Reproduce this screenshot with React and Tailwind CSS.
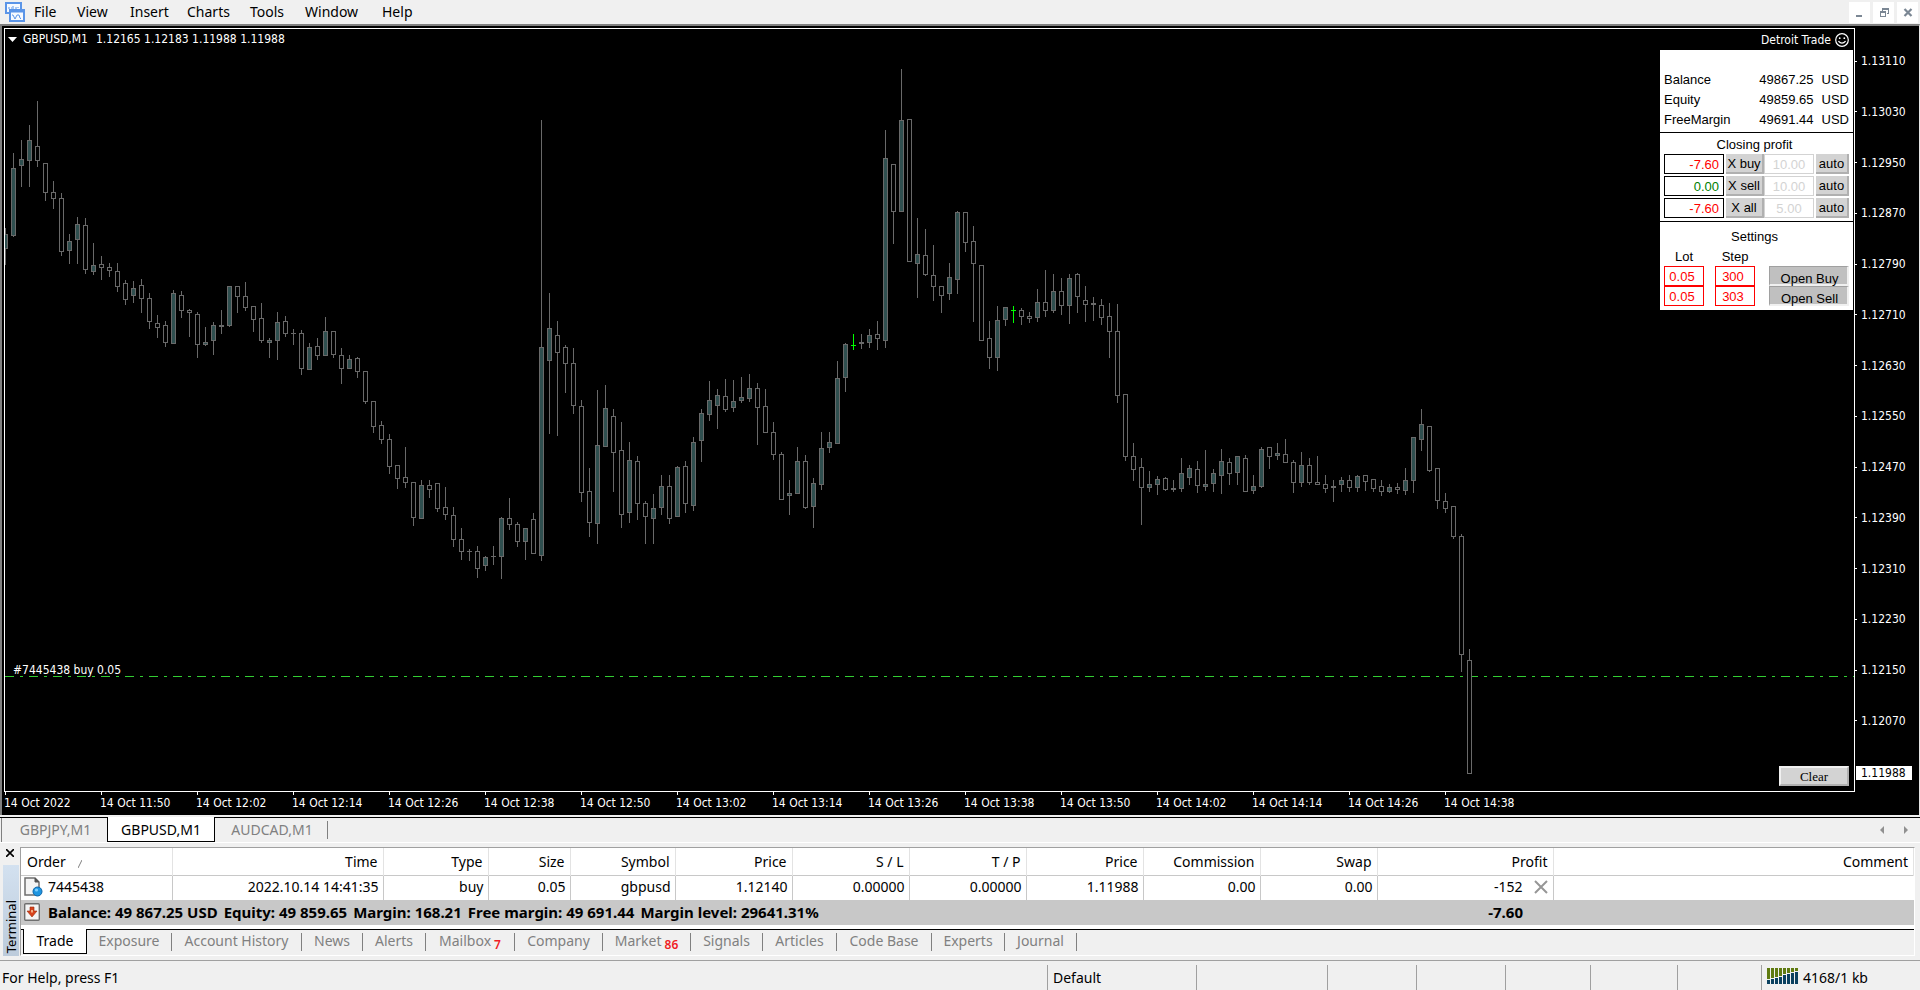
import { useState } from "react";

// x of the first candle and y of the plot's first row, in window pixels
const STEP = 8;
const TOP = 29;

// [high, body top, body bottom, low, kind] : 1 = up, 0 = down, 2 = flat
const CANDLES = [
    [228, 234, 249, 265, 1], [153, 168, 236, 237, 1], [140, 159, 166, 187, 1], [125, 140, 161, 187, 1],
    [101, 146, 161, 167, 0], [163, 163, 193, 201, 0], [181, 192, 199, 209, 0], [193, 198, 252, 256, 0],
    [234, 241, 251, 264, 1], [217, 224, 240, 264, 1], [218, 225, 270, 274, 0], [243, 265, 272, 275, 1],
    [256, 264, 268, 280, 0], [263, 267, 271, 277, 0], [263, 271, 287, 292, 0], [280, 283, 300, 305, 0],
    [281, 288, 296, 303, 1], [279, 285, 299, 313, 0], [293, 298, 322, 329, 0], [315, 323, 328, 338, 0],
    [321, 325, 343, 347, 0], [290, 293, 344, 344, 1], [291, 295, 311, 318, 0], [309, 310, 313, 337, 0],
    [312, 314, 345, 358, 0], [327, 342, 345, 346, 1], [322, 325, 341, 355, 1], [310, 325, 327, 334, 1],
    [286, 286, 326, 327, 1], [286, 286, 297, 313, 0], [282, 296, 308, 311, 0], [306, 306, 320, 332, 0],
    [303, 318, 341, 343, 0], [338, 340, 343, 358, 1], [312, 322, 341, 360, 1], [316, 321, 334, 337, 0],
    [329, 333, 334, 345, 0], [330, 333, 369, 375, 0], [343, 347, 370, 370, 1], [338, 346, 356, 360, 0],
    [317, 331, 356, 356, 1], [331, 331, 355, 358, 0], [348, 355, 369, 384, 0], [355, 359, 369, 369, 1],
    [357, 358, 372, 378, 0], [371, 371, 402, 404, 0], [401, 401, 427, 433, 0], [421, 425, 440, 444, 0],
    [434, 439, 467, 474, 0], [465, 465, 479, 489, 0], [447, 477, 483, 488, 0], [482, 482, 518, 526, 0],
    [480, 485, 519, 519, 1], [480, 485, 490, 498, 0], [483, 483, 509, 512, 0], [487, 507, 515, 520, 0],
    [507, 515, 540, 547, 0], [528, 539, 552, 560, 0], [549, 551, 552, 561, 0], [546, 551, 569, 578, 0],
    [556, 557, 566, 571, 1], [546, 556, 557, 565, 0], [517, 518, 557, 579, 1], [498, 518, 525, 530, 0],
    [522, 524, 542, 547, 0], [528, 528, 542, 560, 1], [513, 519, 554, 554, 0], [120, 347, 556, 561, 1],
    [293, 328, 361, 434, 1], [321, 335, 353, 436, 0], [345, 347, 364, 393, 0], [348, 363, 406, 414, 0],
    [400, 406, 493, 502, 0], [468, 491, 523, 537, 0], [390, 445, 524, 544, 1], [385, 408, 447, 447, 1],
    [409, 416, 453, 492, 0], [422, 450, 515, 528, 0], [442, 460, 513, 523, 1], [456, 461, 504, 520, 0],
    [501, 503, 517, 544, 0], [494, 508, 519, 544, 1], [475, 486, 508, 515, 1], [475, 486, 519, 524, 0],
    [466, 467, 517, 517, 1], [461, 466, 504, 513, 0], [437, 442, 506, 511, 1], [409, 413, 441, 462, 1],
    [381, 400, 415, 421, 1], [389, 395, 406, 429, 1], [379, 396, 410, 412, 0], [380, 401, 408, 412, 1],
    [377, 397, 401, 403, 1], [374, 388, 399, 402, 1], [383, 388, 408, 445, 0], [389, 406, 433, 433, 0],
    [422, 432, 455, 460, 0], [452, 454, 500, 500, 0], [480, 493, 496, 515, 1], [447, 461, 494, 494, 1],
    [455, 461, 508, 509, 0], [478, 483, 507, 528, 1], [432, 448, 485, 490, 1], [432, 442, 448, 453, 1],
    [361, 378, 444, 444, 1], [343, 344, 378, 392, 1], [334, 345, 346, 350, 2], [334, 342, 344, 349, 0],
    [329, 335, 343, 348, 1], [321, 334, 339, 350, 0], [130, 158, 341, 348, 1], [164, 164, 212, 244, 0],
    [69, 120, 212, 212, 1], [119, 119, 262, 262, 0], [218, 254, 264, 298, 1], [229, 255, 275, 276, 0],
    [245, 275, 287, 301, 0], [286, 286, 296, 313, 0], [263, 277, 294, 300, 1], [211, 212, 280, 294, 1],
    [212, 212, 243, 252, 0], [226, 241, 264, 322, 0], [265, 265, 341, 341, 0], [321, 338, 358, 369, 0],
    [306, 320, 358, 371, 1], [307, 307, 320, 326, 1], [306, 310, 311, 323, 2], [308, 310, 317, 325, 0],
    [312, 316, 319, 323, 0], [289, 302, 318, 322, 1], [270, 302, 311, 317, 0], [274, 291, 311, 313, 1],
    [278, 291, 306, 315, 0], [274, 278, 306, 324, 1], [273, 274, 297, 313, 0], [286, 300, 305, 322, 0],
    [297, 303, 305, 321, 0], [299, 305, 318, 325, 0], [303, 316, 332, 358, 0], [304, 331, 396, 403, 0],
    [394, 394, 457, 461, 0], [443, 456, 470, 481, 0], [458, 467, 488, 525, 0], [471, 484, 488, 492, 1],
    [476, 479, 485, 495, 1], [477, 478, 490, 491, 0], [480, 488, 490, 492, 0], [458, 473, 489, 492, 1],
    [465, 468, 478, 485, 1], [461, 469, 486, 493, 0], [450, 484, 487, 491, 1], [469, 473, 484, 492, 1],
    [449, 461, 476, 494, 1], [458, 462, 474, 485, 0], [456, 456, 473, 485, 1], [455, 458, 492, 492, 0],
    [475, 486, 491, 494, 1], [447, 449, 487, 488, 1], [447, 447, 457, 469, 0], [443, 453, 456, 460, 1],
    [439, 454, 463, 463, 0], [460, 462, 483, 493, 0], [452, 465, 483, 487, 1], [458, 465, 483, 485, 0],
    [456, 482, 485, 485, 0], [475, 484, 489, 493, 0], [480, 486, 488, 502, 0], [477, 480, 485, 492, 1],
    [475, 480, 488, 492, 0], [475, 476, 488, 492, 1], [475, 475, 482, 491, 0], [479, 479, 489, 492, 0],
    [480, 486, 492, 496, 0], [484, 487, 492, 493, 1], [483, 487, 490, 494, 0], [468, 480, 491, 495, 1],
    [437, 437, 481, 493, 1], [409, 424, 440, 451, 1], [426, 426, 471, 472, 0], [468, 468, 501, 509, 0],
    [493, 501, 509, 513, 0], [506, 506, 537, 539, 0], [534, 536, 655, 672, 0], [649, 660, 774, 774, 0],
];

const PRICES = [
    "1.13110", "1.13030", "1.12950", "1.12870", "1.12790", "1.12710", "1.12630",
    "1.12550", "1.12470", "1.12390", "1.12310", "1.12230", "1.12150", "1.12070",
];

const TIMES = [
    "14 Oct 2022", "14 Oct 11:50", "14 Oct 12:02", "14 Oct 12:14",
    "14 Oct 12:26", "14 Oct 12:38", "14 Oct 12:50", "14 Oct 13:02",
    "14 Oct 13:14", "14 Oct 13:26", "14 Oct 13:38", "14 Oct 13:50",
    "14 Oct 14:02", "14 Oct 14:14", "14 Oct 14:26", "14 Oct 14:38",
];

const MENU = [
    ["File", "w-[43px]"],
    ["View", "w-[53px]"],
    ["Insert", "w-[57px]"],
    ["Charts", "w-[63px]"],
    ["Tools", "w-[55px]"],
    ["Window", "w-[77px]"],
    ["Help", "w-[53px]"],
];

const CHART_TABS = [
    ["GBPJPY,M1", "w-[105px]"],
    ["GBPUSD,M1", "w-[108px]"],
    ["AUDCAD,M1", "w-[112px]"],
];

const COLUMNS = [
    ["Order", "w-[151px]"],
    ["Time", "w-[211px]"],
    ["Type", "w-[105px]"],
    ["Size", "w-[82px]"],
    ["Symbol", "w-[105px]"],
    ["Price", "w-[117px]"],
    ["S / L", "w-[117px]"],
    ["T / P", "w-[117px]"],
    ["Price", "w-[117px]"],
    ["Commission", "w-[117px]"],
    ["Swap", "w-[117px]"],
    ["Profit", "w-[176px]"],
    ["Comment", ""],
];

const ORDER = [
    "2022.10.14 14:41:35", "buy", "0.05", "gbpusd", "1.12140",
    "0.00000", "0.00000", "1.11988", "0.00", "0.00",
];

const TERMINAL_TABS = [
    ["Trade", "w-[64px]"],
    ["Exposure", "w-[85px]"],
    ["Account History", "w-[130px]"],
    ["News", "w-[61px]"],
    ["Alerts", "w-[63px]"],
    ["Mailbox", "w-[89px]", "7"],
    ["Company", "w-[88px]"],
    ["Market", "w-[88px]", "86"],
    ["Signals", "w-[72px]"],
    ["Articles", "w-[74px]"],
    ["Code Base", "w-[95px]"],
    ["Experts", "w-[73px]"],
    ["Journal", "w-[72px]"],
];

function Logo() {
    return (
        <svg className="h-5 w-5" viewBox="0 0 20 20" fill="none" stroke="#5b95e8" strokeWidth="2">
            <rect x="1" y="1" width="15" height="10" fill="#f7faff" />
            <path d="M4 7v-2M6 6h1M8 4v4M11 5v2M13 5v1" strokeWidth="1" />
            <rect x="5" y="8" width="14" height="11" fill="#f7faff" />
            <path d="M5 9h14" strokeWidth="3" />
            <path d="M7 13h1l2 4 2-4 2 0 1 3 1 1" strokeWidth="1" />
        </svg>
    );
}

function Candles() {
    return (
        <svg className="absolute inset-0 h-full w-full" shapeRendering="crispEdges">
            <line
                x1="0"
                x2="100%"
                y1={676.5 - TOP}
                y2={676.5 - TOP}
                stroke="#32cd32"
                strokeDasharray="9 6 3 6"
            />
            {CANDLES.map(([high, top, bottom, low, kind], i) => {
                const color = kind === 2 ? "#00ff00" : "#696969";
                const height = bottom - top;
                return (
                    <g key={i} transform={`translate(${i * STEP} ${-TOP})`}>
                        <rect x="0" y={high} width="1" height={low - high} fill={color} />
                        <rect x="-2" y={top} width="5" height={height} fill={color} />
                        {height > 2 && (
                            <rect
                                x="-1"
                                y={top + 1}
                                width="3"
                                height={height - 2}
                                fill={kind === 1 ? "#2f4f4f" : "#000"}
                            />
                        )}
                    </g>
                );
            })}
        </svg>
    );
}

function Account({ name, value }) {
    return (
        <div className="flex h-5 items-center">
            <span className="flex-1">{name}</span>
            <span>{value}</span>
            <span className="ml-2">USD</span>
        </div>
    );
}

function ClosingRow({ name, profit, positive, target }) {
    return (
        <div className="flex h-5">
            <output
                className={`flex w-[60px] items-center justify-end border border-black pt-0.5 pr-1 ${positive ? "text-[#008000]" : "text-[#ff0000]"}`}
            >
                {profit}
            </output>
            <button className="ml-0.5 w-[38px] border-r-2 border-b-2 border-[#b0b0b0] bg-[#d3d3d3] pt-0.5">
                {name}
            </button>
            <input
                aria-label={`${name} target`}
                defaultValue={target}
                className="w-[50px] border border-[#d3d3d3] bg-white pt-0.5 text-center text-[#d3d3d3]"
            />
            <button className="ml-0.5 w-[33px] border-r-2 border-b-2 border-[#b0b0b0] bg-[#d3d3d3] pt-0.5">
                auto
            </button>
        </div>
    );
}

function SettingsRow({ lot, step, action }) {
    return (
        <div className="flex h-5">
            <input
                aria-label={`${action} lot`}
                defaultValue={lot}
                className="w-10 border border-[#ff0000] bg-white pt-0.5 pr-1 text-center text-[#ff0000]"
            />
            <input
                aria-label={`${action} step`}
                defaultValue={step}
                className="ml-[11px] w-10 border border-[#ff0000] bg-white pt-0.5 pr-1 text-center text-[#ff0000]"
            />
            <button className="ml-3.5 w-20 border-t border-r-2 border-b-2 border-l border-t-[#a0a0a0] border-r-[#f0f0f0] border-b-[#f0f0f0] border-l-[#a0a0a0] bg-[#c0c0c0] pt-1 pl-0.5">
                {action}
            </button>
        </div>
    );
}

function TradePanel() {
    return (
        <div className="absolute top-0 right-px w-[193px]">
            <div className="flex h-[21px] items-center justify-end gap-1 pr-1 text-white">
                Detroit Trade
                <svg className="h-3.5 w-3.5" viewBox="0 0 14 14" fill="none" stroke="white">
                    <circle cx="7" cy="7" r="6.3" strokeWidth="1.2" />
                    <circle cx="4.7" cy="5.2" r=".9" fill="white" stroke="none" />
                    <circle cx="9.3" cy="5.2" r=".9" fill="white" stroke="none" />
                    <path d="M3.4 8.2q3.6 4 7.2 0" strokeWidth="1.2" />
                </svg>
            </div>
            <div className="bg-white font-['Liberation_Sans',sans-serif] text-[13px] leading-4 text-black">
                <div className="px-1 pt-5 pb-0.5">
                    <Account name="Balance" value="49867.25" />
                    <Account name="Equity" value="49859.65" />
                    <Account name="FreeMargin" value="49691.44" />
                </div>
                <div className="border-y border-black px-1 pt-1 pb-[3px]">
                    <div className="mb-px pr-1 text-center">Closing profit</div>
                    <div className="flex flex-col gap-0.5">
                        <ClosingRow name="X buy" profit="-7.60" target="10.00" />
                        <ClosingRow name="X sell" profit="0.00" positive target="10.00" />
                        <ClosingRow name="X all" profit="-7.60" target="5.00" />
                    </div>
                </div>
                <div className="px-1 pt-[7px] pb-1">
                    <div className="pr-1 text-center">Settings</div>
                    <div className="flex pt-1 pb-px">
                        <span className="w-10 text-center">Lot</span>
                        <span className="ml-[11px] w-10 text-center">Step</span>
                    </div>
                    <SettingsRow lot="0.05" step="300" action="Open Buy" />
                    <SettingsRow lot="0.05" step="303" action="Open Sell" />
                </div>
            </div>
        </div>
    );
}

function ChartWindow() {
    return (
        <section className="flex min-h-0 flex-1 flex-col border-t-2 border-r border-l-2 border-t-[#808080] border-r-[#e3e3e3] border-l-[#808080] bg-black pt-0.5 pl-0.5 font-['DejaVu_Sans_Condensed','Noto_Sans',sans-serif] text-[12px] text-white">
            <div className="flex min-h-0 flex-1">
                <div className="relative flex-1 overflow-hidden border border-white">
                    <Candles />
                    <div className="absolute top-0.5 left-[3px] flex h-4 items-center">
                        <svg className="mr-1.5 h-[5px] w-[9px]" viewBox="0 0 9 5" fill="white">
                            <path d="M0 0h9L4.500 5z" />
                        </svg>
                        <span>GBPUSD,M1</span>
                        <span className="ml-2">1.12165 1.12183 1.11988 1.11988</span>
                    </div>
                    <span className="absolute bottom-[113px] left-2 leading-4">#7445438 buy 0.05</span>
                    <TradePanel />
                    <button className="absolute right-[5px] bottom-[5px] h-5 w-[70px] border-2 border-t-[#f0f0f0] border-r-[#b0b0b0] border-b-[#b0b0b0] border-l-[#f0f0f0] bg-[#d3d3d3] pt-px font-['Liberation_Serif',serif] text-[13px] leading-4 text-black">
                        Clear
                    </button>
                </div>
                <div className="w-16 pt-[26px]">
                    <ul className="flex h-[674px] flex-col justify-between leading-4">
                        {PRICES.map((price) => (
                            <li key={price} className="flex h-3.5 items-center">
                                <span className="mr-1 h-px w-0.5 bg-white" />
                                {price}
                            </li>
                        ))}
                    </ul>
                    <div className="mt-[38px] ml-px h-3.5 w-14 bg-white pl-[5px] leading-[14px] text-black">
                        1.11988
                    </div>
                </div>
            </div>
            <div className="flex h-[23px] pl-px">
                {TIMES.map((time) => (
                    <div key={time} className="w-24 shrink-0">
                        <div className="h-[3px] w-px bg-white" />
                        <div className="-ml-px leading-4">{time}</div>
                    </div>
                ))}
            </div>
        </section>
    );
}

function ChartTabs() {
    const [active, setActive] = useState("GBPUSD,M1");
    return (
        <div className="flex h-7 shrink-0 flex-col border-b border-white bg-[#f0f0f0] pt-0.5">
            <div className="flex h-[25px] border-t border-black">
                <div className="w-0.5 border-r border-[#808080]" />
                {CHART_TABS.map(([tab, width]) => (
                    <button
                        key={tab}
                        onClick={() => setActive(tab)}
                        className={`${width} ${tab === active ? "-mt-px h-[25px] border-r border-b border-l border-black bg-white pt-0.5 text-black" : "pl-0.5 text-[#808080]"}`}
                    >
                        {tab}
                    </button>
                ))}
                <div className="my-[3px] w-px bg-[#808080]" />
                <div className="ml-auto flex items-center gap-5 pr-3">
                    <button aria-label="Scroll left">
                        <svg className="h-2 w-1" viewBox="0 0 4 8" fill="#909090">
                            <path d="M4 0v8L0 4z" />
                        </svg>
                    </button>
                    <button aria-label="Scroll right">
                        <svg className="h-2 w-1" viewBox="0 0 4 8" fill="#909090">
                            <path d="M0 0v8l4-4z" />
                        </svg>
                    </button>
                </div>
            </div>
        </div>
    );
}

function OrdersTable() {
    return (
        <table className="w-full table-fixed border-collapse bg-white text-right">
            <thead>
                <tr className="h-[27px] border-b border-[#c8c8c8]">
                    {COLUMNS.map(([name, width], i) => (
                        <th
                            key={i}
                            className={`${width} border-r border-[#e3e3e3] p-0 pt-0.5 pr-[5px] font-normal first:pl-1.5 first:text-left`}
                        >
                            {name}
                            {i === 0 && (
                                <svg className="ml-3 inline h-2 w-1" viewBox="0 0 4 8" stroke="#808080">
                                    <path d="M0 8L4 0" />
                                </svg>
                            )}
                        </th>
                    ))}
                </tr>
            </thead>
            <tbody>
                <tr className="h-[25px]">
                    <td className="border-r border-[#c8c8c8] p-0 pb-0.5">
                        <div className="flex items-center pl-[3px]">
                            <svg className="mr-[5px] h-5 w-[19px]" viewBox="0 0 19 20">
                                <path d="M1 1h10l4 4v13H1z" fill="#f4f4f4" stroke="#6f6f6f" strokeWidth="1.500" />
                                <path d="M11 1v4h4z" fill="#555" stroke="#555" />
                                <circle cx="13.500" cy="14.500" r="4.500" fill="#1f95e0" stroke="#0c64a8" />
                                <circle cx="12.500" cy="13" r="1.600" fill="#7fd0ff" />
                            </svg>
                            7445438
                        </div>
                    </td>
                    {ORDER.map((value, i) => (
                        <td key={i} className="border-r border-[#c8c8c8] p-0 pr-1 pb-0.5">
                            {value}
                        </td>
                    ))}
                    <td className="border-r border-[#c8c8c8] p-0 pb-0.5">
                        <div className="flex items-center justify-end gap-[11px] pr-[5px]">
                            -152
                            <button aria-label="Close order">
                                <svg className="h-3.5 w-3.5" viewBox="0 0 14 14" stroke="#969696" strokeWidth="2">
                                    <path d="M1 1l12 12M13 1L1 13" />
                                </svg>
                            </button>
                        </div>
                    </td>
                    <td />
                </tr>
                <tr className="h-[25px] bg-[#c8c8c8] text-[15px] font-bold">
                    <td colSpan={11} className="p-0 pb-0.5">
                        <div className="flex items-center gap-1.5 pl-[3px]">
                            <svg className="mr-0.5 h-[18px] w-4" viewBox="0 0 16 18">
                                <rect x=".7" y=".7" width="14.600" height="16.600" rx="1" fill="#f4f4f4" stroke="#6f6f6f" strokeWidth="1.400" />
                                <path d="M6 4h4v4h3l-5 6-5-6h3z" fill="#d8431c" stroke="#9b2a0c" strokeWidth=".6" />
                                <path d="M7.300 7h1.400v2.500H7.300z" fill="#ffd9b0" />
                            </svg>
                            <span>Balance: 49 867.25 USD</span>
                            <span>Equity: 49 859.65</span>
                            <span>Margin: 168.21</span>
                            <span>Free margin: 49 691.44</span>
                            <span>Margin level: 29641.31%</span>
                        </div>
                    </td>
                    <td className="p-0 pr-[30px] pb-0.5">-7.60</td>
                    <td />
                </tr>
            </tbody>
        </table>
    );
}

function Terminal() {
    const [active, setActive] = useState("Trade");
    return (
        <section className="flex h-[117px] shrink-0 bg-[#f0f0f0] pt-1 pr-[5px] pb-1">
            <div className="flex w-5 flex-col pl-[3px]">
                <button aria-label="Close terminal" className="flex h-[18px] items-center pb-1.5 pl-[3px]">
                    <svg className="h-2 w-2" viewBox="0 0 8 8" stroke="black" strokeWidth="1.600">
                        <path d="M0 0l8 8M8 0L0 8" />
                    </svg>
                </button>
                <div className="mr-px flex flex-1 items-center bg-linear-to-b from-[#d3e1f0] to-[#bccbdb] pt-8 text-[13px] leading-4">
                    <span className="rotate-180 [writing-mode:vertical-rl]">Terminal</span>
                </div>
            </div>
            <div className="flex min-w-0 flex-1 flex-col border-t border-r border-b border-l border-t-[#a0a0a0] border-r-white border-b-white border-l-[#a0a0a0]">
                <OrdersTable />
                <div className="h-1 bg-white" />
                <div className="flex h-[26px] border-t border-black">
                    <div className="w-0.5" />
                    {TERMINAL_TABS.map(([tab, width, count]) => (
                        <button
                            key={tab}
                            onClick={() => setActive(tab)}
                            className={`${width} flex items-center justify-center ${tab === active ? "-mt-px h-[25px] border-r border-b border-l border-black bg-white text-black" : "mt-[3px] mb-1 border-r border-[#808080] pb-0.5 text-[#808080]"}`}
                        >
                            {tab}
                            {count && (
                                <sub className="top-1 bottom-0 ml-[3px] text-[12px] font-semibold text-[#f01c24]">{count}</sub>
                            )}
                        </button>
                    ))}
                </div>
            </div>
        </section>
    );
}

function StatusBar() {
    return (
        <footer className="flex h-[30px] shrink-0 border-t border-[#a0a0a0] bg-[#f0f0f0] pt-1">
            <div className="flex flex-1 items-center pl-0.5">For Help, press F1</div>
            <div className="flex w-[149px] items-center border-l border-[#a0a0a0] pl-[5px]">Default</div>
            <div className="w-[131px] border-l border-[#a0a0a0]" />
            <div className="w-[89px] border-l border-[#a0a0a0]" />
            <div className="w-[89px] border-l border-[#a0a0a0]" />
            <div className="w-[85px] border-l border-[#a0a0a0]" />
            <div className="w-[87px] border-l border-[#a0a0a0]" />
            <div className="w-[84px] border-l border-[#a0a0a0]" />
            <div className="flex w-[159px] items-center gap-1 border-l border-[#a0a0a0] pl-[5px]">
                <svg className="mb-1 h-4 w-8" viewBox="0 0 32 16" shapeRendering="crispEdges">
                    {[11, 10, 9, 8, 6, 5, 4, 3].map((split, i) => (
                        <g key={i}>
                            <rect x={i * 4} y="0" width="3" height={split} fill="#5f7a10" />
                            <rect x={i * 4} y={split + 1} width="3" height={15 - split} fill="#0b405f" />
                        </g>
                    ))}
                </svg>
                <span>4168/1 kb</span>
            </div>
        </footer>
    );
}

export default function App() {
    return (
        <div className="flex h-screen min-h-[600px] flex-col overflow-hidden bg-[#f0f0f0] font-['Noto_Sans',sans-serif] text-[14px] leading-5 text-black">
            <header className="flex h-6 shrink-0 items-center pl-[5px]">
                <Logo />
                <nav className="flex pl-[9px]">
                    {MENU.map(([name, width]) => (
                        <button key={name} className={`${width} text-left`}>
                            {name}
                        </button>
                    ))}
                </nav>
                <div className="ml-auto flex gap-[3px] pr-0.5">
                    <button aria-label="Minimize" className="flex h-[21px] w-[21px] items-center justify-center bg-white">
                        <svg className="h-3 w-3" viewBox="0 0 12 12" fill="#7b8794">
                            <path d="M2 9h6v2H2z" />
                        </svg>
                    </button>
                    <button aria-label="Restore" className="flex h-[21px] w-[21px] items-center justify-center bg-white">
                        <svg className="h-3 w-3" viewBox="0 0 12 12" fill="#7b8794" shapeRendering="crispEdges">
                            <path d="M4 2h7v6H9V7h1V4H5v1H4z" />
                            <path d="M2 5h6v6H2zM3 7v3h4V7z" fillRule="evenodd" />
                        </svg>
                    </button>
                    <button aria-label="Close" className="flex h-[21px] w-[21px] items-center justify-center bg-white">
                        <svg className="h-3 w-3" viewBox="0 0 12 12" stroke="#7b8794" strokeWidth="2.200">
                            <path d="M2.500 3l7 7M9.500 3l-7 7" />
                        </svg>
                    </button>
                </div>
            </header>
            <ChartWindow />
            <ChartTabs />
            <Terminal />
            <StatusBar />
        </div>
    );
}
